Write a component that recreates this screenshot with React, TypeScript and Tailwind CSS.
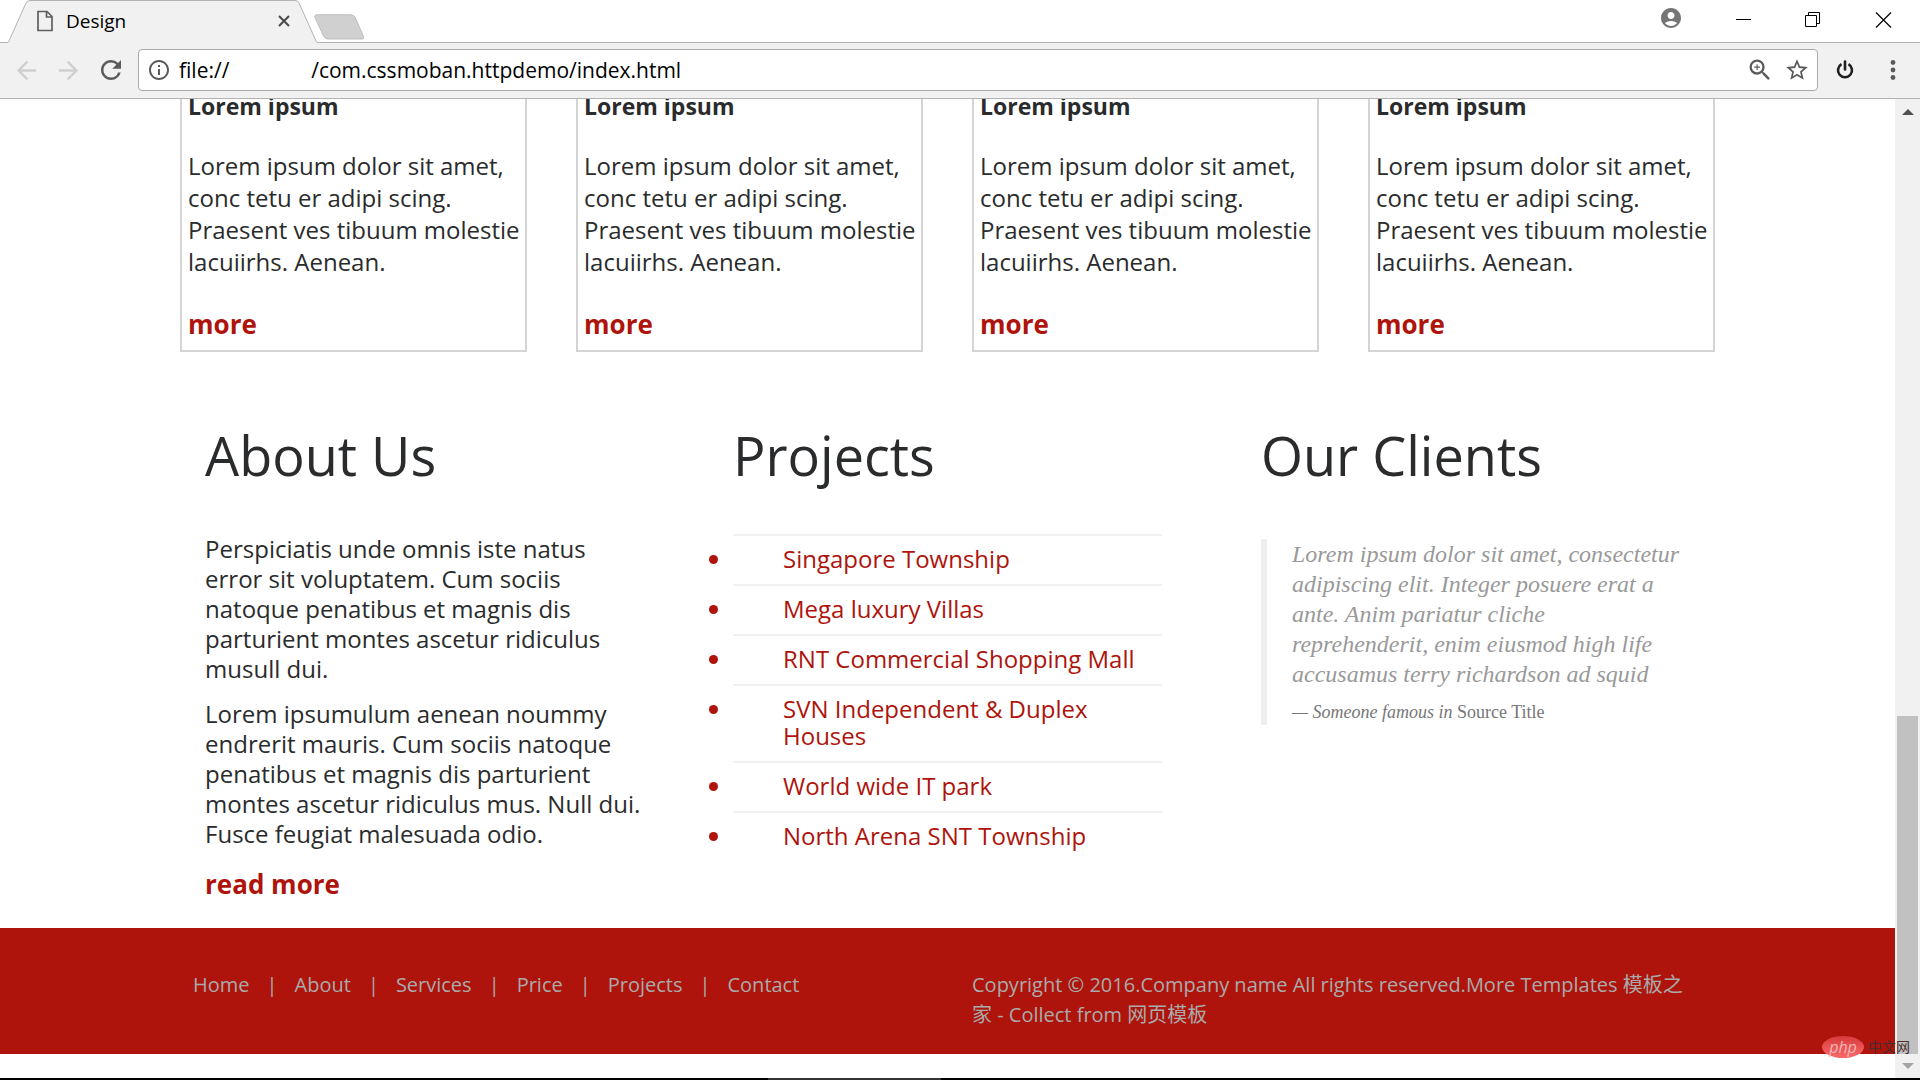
import { ReactNode } from 'react';
import { MdAccountCircle, MdArrowBack, MdArrowForward, MdInfoOutline, MdRefresh, MdStarBorder, MdZoomIn } from 'react-icons/md';

const CARDS = [1, 2, 3, 4];

const PROJECTS = [
  'Singapore Township',
  'Mega luxury Villas',
  'RNT Commercial Shopping Mall',
  'SVN Independent & Duplex Houses',
  'World wide IT park',
  'North Arena SNT Township',
];

const NAV = ['Home', 'About', 'Services', 'Price', 'Projects', 'Contact'];

const PAGE_URL = `file://${'\u00a0'.repeat(15)}/com.cssmoban.httpdemo/index.html`;

function TabStrip() {
  return (
    <div className="relative flex h-[43px] items-start justify-between border-b border-[#b3b3b3] bg-white">
      <div className="flex">
        <div className="relative h-[43px] w-[326px]">
          <svg className="absolute top-0 left-0" width="326" height="43" viewBox="0 0 326 43">
            <path d="M7 43 L8.5 42 L26 3 Q27.5 .5 30 .5 L295 .5 Q298 .5 299 3 L316.500 42 L319 43" fill="#f1f1f1" stroke="#b3b3b3" />
          </svg>
          <div className="relative flex h-[42px] items-center pl-9">
            <svg width="18" height="22" viewBox="0 0 18 22" fill="none" stroke="#5f5f5f" strokeWidth="1.7">
              <path d="M2 1.500 H11 L16 6.500 V20.500 H2 Z M10.500 2 V7 H16" />
            </svg>
            <span className="ml-3 text-[19px] leading-6 text-black">Design</span>
            <button aria-label="Close tab" className="absolute left-[277px]">
              <svg width="14" height="14" viewBox="0 0 14 14" stroke="#4a4a4a" strokeWidth="2">
                <path d="M2 2 L12 12 M12 2 L2 12" />
              </svg>
            </button>
          </div>
        </div>
        <button aria-label="New tab" className="-ml-3 mt-[10px]">
          <svg width="52" height="26" viewBox="0 0 52 26">
            <path d="M3 .8 H37 Q40 .8 41.500 4 L49.500 22.500 Q50.500 25 48 25 H14 Q11 25 9.500 22 L.8 3 Q.3 .8 3 .8 Z" fill="#d0d0d0" stroke="#bdbdbd" />
          </svg>
        </button>
      </div>
      <div className="flex items-center pt-1">
        <button aria-label="Account" className="mt-[2px] mr-[52px] text-[#757575]">
          <MdAccountCircle size={24} />
        </button>
        <button aria-label="Minimize" className="mt-2 mr-[52px]">
          <svg width="18" height="18" viewBox="0 0 18 18" stroke="#000">
            <path d="M1 7.500 H16" />
          </svg>
        </button>
        <button aria-label="Restore" className="mt-2 mr-[52px]">
          <svg width="18" height="18" viewBox="0 0 18 18" fill="none" stroke="#000">
            <path d="M.5 3.500 H11.500 V14.500 H.5 Z M3.500 3.500 V.5 H14.500 V11.500 H11.500" />
          </svg>
        </button>
        <button aria-label="Close" className="mt-2 mr-[27px]">
          <svg width="18" height="18" viewBox="0 0 18 18" stroke="#000" strokeWidth="1.200">
            <path d="M1 .5 L16 15.500 M16 .5 L1 15.500" />
          </svg>
        </button>
      </div>
    </div>
  );
}

function Toolbar() {
  return (
    <div className="flex items-center border-b border-[#b3b3b3] bg-[#f1f1f1] pt-[6px] pr-4 pb-[7px] pl-3">
      <button aria-label="Back" className="text-[#cfcfcf]"><MdArrowBack size={29} /></button>
      <button aria-label="Forward" className="ml-[13px] text-[#cfcfcf]"><MdArrowForward size={29} /></button>
      <button aria-label="Reload" className="ml-[13px] text-[#5a5a5a]"><MdRefresh size={30} /></button>
      <div className="ml-3 flex h-[42px] flex-1 items-center rounded border border-[#a9a9a9] bg-white pr-[7px] pl-2">
        <MdInfoOutline size={24} className="text-[#5a5a5a]" />
        <input
          aria-label="Address"
          defaultValue={PAGE_URL}
          className="ml-2 min-w-0 flex-1 text-[21px] leading-7 text-black outline-none"
        />
        <button aria-label="Zoom" className="text-[#5a5a5a]"><MdZoomIn size={28} /></button>
        <button aria-label="Bookmark this page" className="ml-[10px] text-[#5a5a5a]"><MdStarBorder size={26} /></button>
      </div>
      <button aria-label="Power" className="ml-[18px]">
        <svg width="18" height="20" viewBox="0 0 18 20" fill="none" stroke="#1f1f1f" strokeWidth="2.600">
          <path d="M5.500 4.200 A7 7 0 1 0 12.500 4.200" />
          <path d="M9 1.500 V9.500" strokeLinecap="round" />
        </svg>
      </button>
      <button aria-label="Menu" className="ml-7">
        <svg width="22" height="22" viewBox="0 0 22 22" fill="#5a5a5a">
          <circle cx="11" cy="3.500" r="2.400" />
          <circle cx="11" cy="11" r="2.400" />
          <circle cx="11" cy="18.500" r="2.400" />
        </svg>
      </button>
    </div>
  );
}

function ScrollBar() {
  return (
    <div className="flex w-[25px] shrink-0 flex-col bg-[#f1f1f1]">
      <button aria-label="Scroll up" className="flex h-[26px] items-center justify-center">
        <svg width="12" height="6" viewBox="0 0 12 6" fill="#505050"><path d="M0 6 L6 0 L12 6 Z" /></svg>
      </button>
      <div className="flex-1" />
      <div className="mx-[2px] h-[338px] bg-[#c1c1c1]" />
      <button aria-label="Scroll down" className="flex h-6 items-center justify-center">
        <svg width="12" height="6" viewBox="0 0 12 6" fill="#a3a3a3"><path d="M0 0 L6 6 L12 0 Z" /></svg>
      </button>
    </div>
  );
}

function Card() {
  return (
    <article className="border-2 border-[#d4d4d4] py-2 pl-[6px]">
      <h3 className="text-[23px] leading-8 font-bold">Lorem ipsum</h3>
      <p className="mt-7 text-2xl leading-8">
        Lorem ipsum dolor sit amet, conc tetu er adipi scing. Praesent ves tibuum molestie lacuiirhs. Aenean.
      </p>
      <a href="#" className="mt-[30px] mb-[2px] block text-[26px] leading-8 font-bold text-[#ae140c]">more</a>
    </article>
  );
}

function Column({ title, children }: { title: string; children: ReactNode }) {
  return (
    <section>
      <h2 className="mb-[49px] text-[54px] leading-[60px]">{title}</h2>
      {children}
    </section>
  );
}

export default function App() {
  return (
    <div className="flex min-h-screen flex-col bg-white font-['Open_Sans','Noto_Sans_CJK_SC',sans-serif] text-[#2a2b2c]">
      <header>
        <TabStrip />
        <Toolbar />
      </header>

      <div className="flex flex-1 overflow-hidden">
        <main className="min-w-0 flex-1">
          <div className="mx-auto -mt-[19px] grid w-[81%] grid-cols-4 gap-[49px]">
            {CARDS.map(n => <Card key={n} />)}
          </div>

          <div className="mx-auto mt-[73px] grid w-[81%] grid-cols-3 gap-[99px] px-[25px] pb-[29px]">
            <Column title="About Us">
              <div className="-mr-3 text-2xl leading-[30px]">
                <p>
                  Perspiciatis unde omnis iste natus error sit voluptatem. Cum sociis natoque penatibus et magnis dis
                  parturient montes ascetur ridiculus musull dui.
                </p>
                <p className="mt-[15px]">
                  Lorem ipsumulum aenean noummy endrerit mauris. Cum sociis natoque penatibus et magnis dis parturient
                  montes ascetur ridiculus mus. Null dui. Fusce feugiat malesuada odio.
                </p>
              </div>
              <a href="#" className="mt-5 block text-[26px] leading-[30px] font-bold text-[#ae140c]">read more</a>
            </Column>

            <Column title="Projects">
              <ul className="list-disc text-2xl leading-[27px] text-[#ae140c]">
                {PROJECTS.map(name => (
                  <li key={name} className="border-t-2 border-[#f1f1f1] pt-[9px] pb-3 pl-[50px]">
                    <a href="#">{name}</a>
                  </li>
                ))}
              </ul>
            </Column>

            <Column title="Our Clients">
              <blockquote className="mt-[54px] border-l-[6px] border-[#eee] pl-[25px] font-['Liberation_Serif',serif] text-[#999]">
                <p className="text-2xl leading-[30px] italic">
                  Lorem ipsum dolor sit amet, consectetur adipiscing elit. Integer posuere erat a<br />
                  ante. Anim pariatur cliche<br />
                  reprehenderit, enim eiusmod high life accusamus terry richardson ad squid
                </p>
                <footer className="mt-[10px] text-lg leading-[26px] text-[#777]">
                  <i>— Someone famous in</i> <cite className="not-italic">Source Title</cite>
                </footer>
              </blockquote>
            </Column>
          </div>

          <footer className="bg-[#ae140c] pt-[42px] pb-6 text-xl leading-[30px] text-[#aaa]">
            <div className="mx-auto grid w-[81%] grid-cols-2 gap-[49px]">
              <nav className="flex gap-[17px] pl-[13px]">
                {NAV.map((label, i) => (
                  <span key={label} className="flex gap-[17px]">
                    {i > 0 && <span>|</span>}
                    <a href="#">{label}</a>
                  </span>
                ))}
              </nav>
              <p className="pr-5">
                Copyright © 2016.Company name All rights reserved.More Templates <a href="#">模板之家</a> - Collect from{' '}
                <a href="#">网页模板</a>
              </p>
            </div>
          </footer>
        </main>
        <ScrollBar />
      </div>

      <div className="flex h-[2px] bg-black">
        <div className="ml-[40%] w-[9%] bg-[#333]" />
      </div>

      {/* Watermark */}
      <div className="absolute right-[10px] bottom-[22px] flex items-center gap-1">
        <span className="flex h-[22px] w-[42px] items-center justify-center rounded-[50%] bg-linear-to-b from-[#d8393a] to-[#f9696c] text-base leading-4 text-[#f3b5b2] italic">
          php
        </span>
        <span className="text-sm leading-5 text-[#4a2a2c]">中文网</span>
      </div>
    </div>
  );
}
